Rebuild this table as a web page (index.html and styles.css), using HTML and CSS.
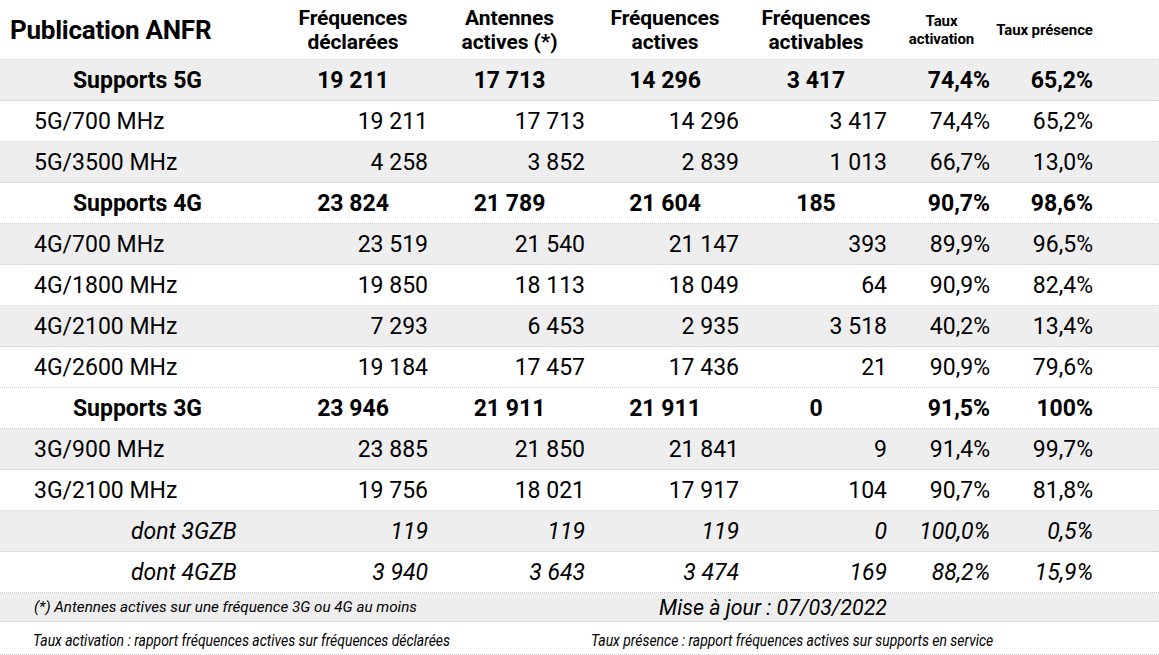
FILE: index.html
```html
<!DOCTYPE html>
<html lang="fr">
<head>
<meta charset="utf-8">
<title>Publication ANFR</title>
<link rel="stylesheet" href="styles.css">
</head>
<body>
<div class="table">
  <div class="row head">
    <div class="cell title">Publication ANFR</div>
    <div class="cell hc">Fréquences<br>déclarées</div>
    <div class="cell hc">Antennes<br>actives (*)</div>
    <div class="cell hc">Fréquences<br>actives</div>
    <div class="cell hc">Fréquences<br>activables</div>
    <div class="cell hs">Taux<br>activation</div>
    <div class="cell hs">Taux présence</div>
  </div>

  <div class="row grp gray">
    <div class="cell lab">Supports 5G</div>
    <div class="cell c">19 211</div><div class="cell c">17 713</div><div class="cell c">14 296</div><div class="cell c">3 417</div>
    <div class="cell r">74,4%</div><div class="cell r">65,2%</div>
  </div>
  <div class="row">
    <div class="cell sub">5G/700 MHz</div>
    <div class="cell r">19 211</div><div class="cell r">17 713</div><div class="cell r">14 296</div><div class="cell r">3 417</div>
    <div class="cell r">74,4%</div><div class="cell r">65,2%</div>
  </div>
  <div class="row gray">
    <div class="cell sub">5G/3500 MHz</div>
    <div class="cell r">4 258</div><div class="cell r">3 852</div><div class="cell r">2 839</div><div class="cell r">1 013</div>
    <div class="cell r">66,7%</div><div class="cell r">13,0%</div>
  </div>

  <div class="row grp">
    <div class="cell lab">Supports 4G</div>
    <div class="cell c">23 824</div><div class="cell c">21 789</div><div class="cell c">21 604</div><div class="cell c">185</div>
    <div class="cell r">90,7%</div><div class="cell r">98,6%</div>
  </div>
  <div class="row gray">
    <div class="cell sub">4G/700 MHz</div>
    <div class="cell r">23 519</div><div class="cell r">21 540</div><div class="cell r">21 147</div><div class="cell r">393</div>
    <div class="cell r">89,9%</div><div class="cell r">96,5%</div>
  </div>
  <div class="row">
    <div class="cell sub">4G/1800 MHz</div>
    <div class="cell r">19 850</div><div class="cell r">18 113</div><div class="cell r">18 049</div><div class="cell r">64</div>
    <div class="cell r">90,9%</div><div class="cell r">82,4%</div>
  </div>
  <div class="row gray">
    <div class="cell sub">4G/2100 MHz</div>
    <div class="cell r">7 293</div><div class="cell r">6 453</div><div class="cell r">2 935</div><div class="cell r">3 518</div>
    <div class="cell r">40,2%</div><div class="cell r">13,4%</div>
  </div>
  <div class="row">
    <div class="cell sub">4G/2600 MHz</div>
    <div class="cell r">19 184</div><div class="cell r">17 457</div><div class="cell r">17 436</div><div class="cell r">21</div>
    <div class="cell r">90,9%</div><div class="cell r">79,6%</div>
  </div>

  <div class="row grp">
    <div class="cell lab">Supports 3G</div>
    <div class="cell c">23 946</div><div class="cell c">21 911</div><div class="cell c">21 911</div><div class="cell c">0</div>
    <div class="cell r">91,5%</div><div class="cell r">100%</div>
  </div>
  <div class="row gray">
    <div class="cell sub">3G/900 MHz</div>
    <div class="cell r">23 885</div><div class="cell r">21 850</div><div class="cell r">21 841</div><div class="cell r">9</div>
    <div class="cell r">91,4%</div><div class="cell r">99,7%</div>
  </div>
  <div class="row">
    <div class="cell sub">3G/2100 MHz</div>
    <div class="cell r">19 756</div><div class="cell r">18 021</div><div class="cell r">17 917</div><div class="cell r">104</div>
    <div class="cell r">90,7%</div><div class="cell r">81,8%</div>
  </div>
  <div class="row ital gray">
    <div class="cell dont">dont 3GZB</div>
    <div class="cell r">119</div><div class="cell r">119</div><div class="cell r">119</div><div class="cell r">0</div>
    <div class="cell r">100,0%</div><div class="cell r">0,5%</div>
  </div>
  <div class="row ital">
    <div class="cell dont">dont 4GZB</div>
    <div class="cell r">3 940</div><div class="cell r">3 643</div><div class="cell r">3 474</div><div class="cell r">169</div>
    <div class="cell r">88,2%</div><div class="cell r">15,9%</div>
  </div>

  <div class="row note gray">
    <div class="cell note1">(*) Antennes actives sur une fréquence 3G ou 4G au moins</div>
    <div class="cell maj">Mise à jour : 07/03/2022</div>
  </div>
  <div class="row legend">
    <div class="cell leg1"><span class="narrow">Taux activation : rapport fréquences actives sur fréquences déclarées</span></div>
    <div class="cell leg2"><span class="narrow">Taux présence : rapport fréquences actives sur supports en service</span></div>
  </div>
</div>
</body>
</html>
```

FILE: styles.css
```css
* { box-sizing: border-box; }

html, body {
  margin: 0;
  padding: 0;
  background: #ffffff;
}

body {
  font-family: Roboto, "Liberation Sans", sans-serif;
  color: #000;
  width: 1159px;
  height: 655px;
  overflow: hidden;
}

.table {
  display: flex;
  flex-direction: column;
}

.row {
  display: grid;
  grid-template-columns: 275px 156px 157px 154px 148px 103px 103px 1fr;
  height: 41px;
  align-items: center;
  border-bottom: 1px dotted #cdcdcd;
  font-size: 23px;
}

.gray { background: #eeeeee; }

.cell { white-space: nowrap; }

.r { text-align: right; padding-right: 3px; }
.c { text-align: center; }

.grp { font-weight: 700; }

.lab { text-align: center; }
.sub { padding-left: 34px; }

.ital { font-style: italic; }
.dont { padding-left: 131px; }

/* header */
.head {
  height: 60px;
  font-weight: 700;
}
.title {
  font-size: 26px;
  letter-spacing: -0.25px;
  padding-left: 10px;
}
.hc {
  text-align: center;
  font-size: 21px;
  line-height: 24px;
  letter-spacing: -0.1px;
}
.hs {
  text-align: center;
  font-size: 15px;
  line-height: 18px;
  letter-spacing: -0.1px;
}

/* footer */
.note {
  height: 29px;
}
.note1 {
  grid-column: 1 / 4;
  padding-left: 34px;
  font-size: 15.2px;
  font-style: italic;
}
.maj {
  grid-column: 4 / 6;
  text-align: right;
  padding-right: 3px;
  font-size: 21.4px;
  font-style: italic;
}

.legend {
  height: 33px;
}
.leg1 {
  grid-column: 1 / 4;
  padding-left: 33px;
}
.leg2 {
  grid-column: 4 / 8;
  padding-left: 3px;
}
.narrow {
  display: inline-block;
  font-size: 17px;
  font-style: italic;
  transform: scaleX(0.82);
  transform-origin: left center;
}
```
